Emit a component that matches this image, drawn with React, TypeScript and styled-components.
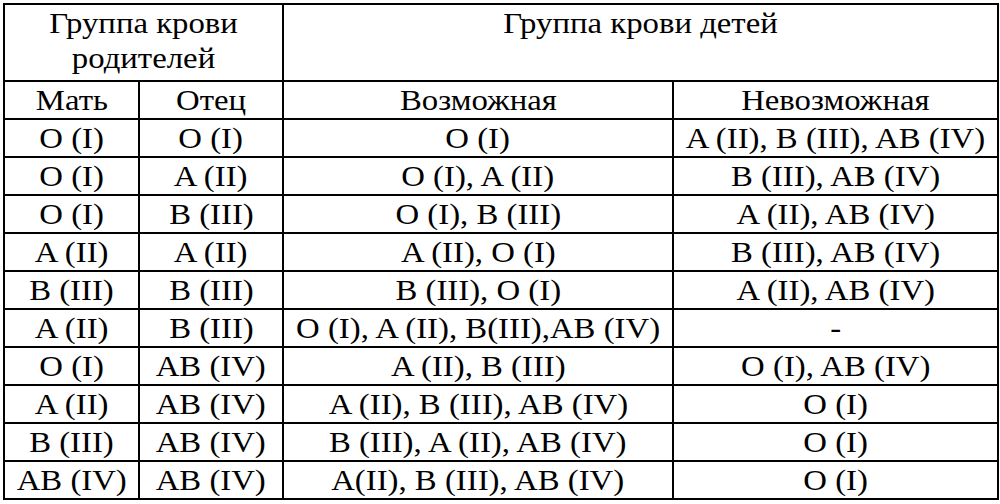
import styled, { createGlobalStyle } from 'styled-components';

const GlobalStyle = createGlobalStyle`
  html, body {
    margin: 0;
    padding: 0;
    background: #ffffff;
  }
  body {
    font-family: "Liberation Serif", "Times New Roman", serif;
    color: #000;
  }
`;

const Page = styled.div`
  width: 1000px;
  height: 504px;
  padding: 3px 0 0 3px;
  box-sizing: border-box;
  overflow: hidden;
`;

const Table = styled.table`
  border-collapse: collapse;
  table-layout: fixed;
  width: 994px;
  font-family: "Liberation Serif", "Times New Roman", serif;
  font-size: 29px;
  line-height: 35px;
  color: #000;
`;

const Col = styled.col<{ $w: number }>`
  width: ${(p) => p.$w}px;
`;

const Cell = styled.td`
  border: 2px solid #000;
  text-align: center;
  vertical-align: middle;
  padding: 0;
  height: 38px;
  white-space: nowrap;
  box-sizing: border-box;
`;

const HeadCell = styled(Cell).attrs({ as: 'th' })<{ $top?: boolean }>`
  font-weight: 400;
  vertical-align: ${(p) => (p.$top ? 'top' : 'middle')};
  padding-top: ${(p) => (p.$top ? '1px' : '0')};
  height: ${(p) => (p.$top ? 77 : 38)}px;
`;

// текст в оригинале немного растянут по горизонтали
const Txt = styled.span`
  display: inline-block;
  transform: scaleX(1.13);
`;

const rows: [string, string, string, string][] = [
  ['O (I)', 'O (I)', 'O (I)', 'A (II), B (III), AB (IV)'],
  ['O (I)', 'A (II)', 'O (I), A (II)', 'B (III), AB (IV)'],
  ['O (I)', 'B (III)', 'O (I), B (III)', 'A (II), AB (IV)'],
  ['A (II)', 'A (II)', 'A (II), O (I)', 'B (III), AB (IV)'],
  ['B (III)', 'B (III)', 'B (III), O (I)', 'A (II), AB (IV)'],
  ['A (II)', 'B (III)', 'O (I), A (II), B(III),AB (IV)', '-'],
  ['O (I)', 'AB (IV)', 'A (II), B (III)', 'O (I), AB (IV)'],
  ['A (II)', 'AB (IV)', 'A (II), B (III), AB (IV)', 'O (I)'],
  ['B (III)', 'AB (IV)', 'B (III), A (II), AB (IV)', 'O (I)'],
  ['AB (IV)', 'AB (IV)', 'A(II), B (III), AB (IV)', 'O (I)'],
];

const subHeads = ['Мать', 'Отец', 'Возможная', 'Невозможная'];

export default function App() {
  return (
    <Page>
      <GlobalStyle />
      <Table>
        <colgroup>
          <Col $w={135} />
          <Col $w={144} />
          <Col $w={390} />
          <Col $w={325} />
        </colgroup>
        <thead>
          <tr>
            <HeadCell colSpan={2} $top>
              <Txt>
                Группа крови
                <br />
                родителей
              </Txt>
            </HeadCell>
            <HeadCell colSpan={2} $top>
              <Txt>Группа крови детей</Txt>
            </HeadCell>
          </tr>
          <tr>
            {subHeads.map((h) => (
              <HeadCell key={h}>
                <Txt>{h}</Txt>
              </HeadCell>
            ))}
          </tr>
        </thead>
        <tbody>
          {rows.map((r, i) => (
            <tr key={i}>
              {r.map((c, j) => (
                <Cell key={j}>
                  <Txt>{c}</Txt>
                </Cell>
              ))}
            </tr>
          ))}
        </tbody>
      </Table>
    </Page>
  );
}
